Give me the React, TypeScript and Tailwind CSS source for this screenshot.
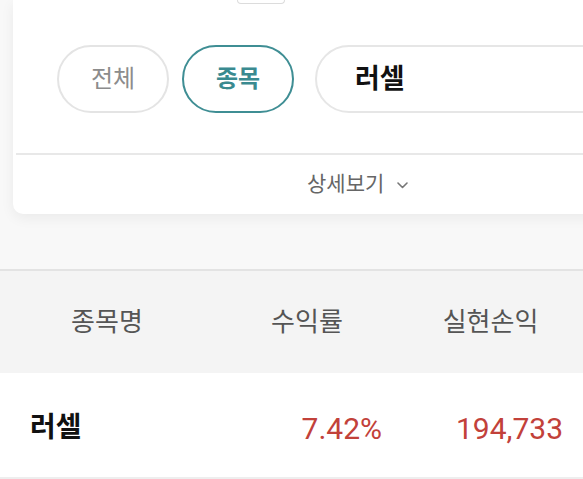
import React from "react";

const font = { fontFamily: 'Roboto, "Noto Sans CJK KR", "Noto Sans", sans-serif' };

export default function App() {
  return (
    <div
      className="w-[583px] h-[479px] overflow-hidden bg-[#f8f8f8] flex flex-col"
      style={font}
    >
      {/* Card */}
      <div className="ml-[13px] w-[640px] shrink-0 bg-white rounded-b-[10px] shadow-[0_4px_14px_rgba(0,0,0,0.06)] flex flex-col">
        <div className="ml-[224px] w-[48px] h-[4px] border-x border-b border-[#dcdcdc] rounded-b-[4px]" />
        <div className="flex items-center mt-[41px] pl-[44px]">
          <div className="shrink-0 w-[112px] h-[68px] rounded-full border-2 border-[#e4e4e4] flex items-center justify-center text-[24px] text-[#8c8c8c]">
            전체
          </div>
          <div className="shrink-0 ml-[13px] w-[112px] h-[68px] rounded-full border-2 border-[#3f8e94] flex items-center justify-center text-[24px] font-bold text-[#3a8a90]">
            종목
          </div>
          <div className="shrink-0 ml-[21px] w-[420px] h-[68px] rounded-full border-2 border-[#e6e6e6] flex items-center pl-[38px] text-[27px] font-bold text-[#111]">
            러셀
          </div>
        </div>
        <div className="mt-[40px] ml-[3px] h-[2px] bg-[#e8e8e8]" />
        <div className="h-[59px] flex items-center pl-[294px] text-[21px] text-[#666]">
          <span>상세보기</span>
          <svg
            className="ml-[13px] mt-[2px]"
            width="11"
            height="7"
            viewBox="0 0 11 7"
            fill="none"
          >
            <path
              d="M1 1l4.5 4.5L10 1"
              stroke="#777"
              strokeWidth="1.6"
              strokeLinecap="round"
              strokeLinejoin="round"
            />
          </svg>
        </div>
      </div>

      {/* Table */}
      <div className="mt-[55px] border-t-2 border-[#e3e3e3] bg-[#f4f4f4] h-[104px] shrink-0 grid grid-cols-[230px_154px_1fr] items-center text-[26px] text-[#555]">
        <div className="text-center pr-[16px]">종목명</div>
        <div className="text-center">수익률</div>
        <div className="text-center pl-[14px]">실현손익</div>
      </div>
      <div className="bg-white h-[106px] shrink-0 border-b-2 border-[#eeeeee] grid grid-cols-[230px_154px_1fr] items-center pt-[6px]">
        <div className="pl-[30px] text-[28px] font-bold text-[#111]">러셀</div>
        <div className="text-right pr-[2px] text-[30px] text-[#c2413a]">7.42%</div>
        <div className="text-right pr-[20px] text-[30px] text-[#c2413a]">194,733</div>
      </div>
    </div>
  );
}
